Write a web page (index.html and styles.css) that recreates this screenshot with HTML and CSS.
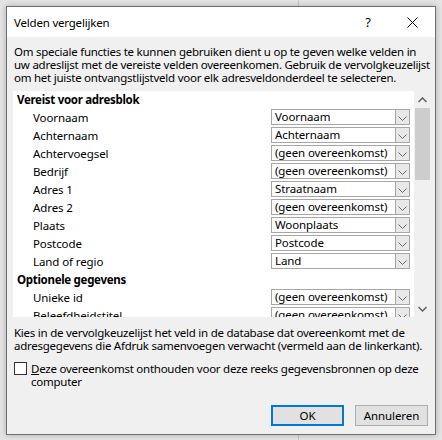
FILE: index.html
```html
<!DOCTYPE html>
<html lang="nl">
<head>
<meta charset="utf-8">
<title>Velden vergelijken</title>
<link rel="stylesheet" href="styles.css">
</head>
<body>
<div class="dialog">
  <div class="titlebar">
    <span class="title">Velden vergelijken</span>
    <span class="help">?</span>
    <span class="close"><svg width="11" height="11" viewBox="0 0 11 11"><path d="M0.5 0.5L10.5 10.5M10.5 0.5L0.5 10.5" stroke="#000" stroke-width="1" fill="none"/></svg></span>
  </div>
  <div class="content">
    <p class="intro">Om speciale functies te kunnen gebruiken dient u op te geven welke velden in<br>uw adreslijst met de vereiste velden overeenkomen. Gebruik de vervolgkeuzelijst<br>om het juiste ontvangstlijstveld voor elk adresveldonderdeel te selecteren.</p>
    <div class="listbox">
      <div class="rows">
        <div class="group">Vereist voor adresblok</div>
        <div class="row"><span class="label">Voornaam</span><div class="combo"><span class="value">Voornaam</span><span class="arrow"><svg width="9" height="5" viewBox="0 0 9 5"><path d="M0.5 0.5L4.5 4.5L8.5 0.5" stroke="#6a6a6a" fill="none"/></svg></span></div></div>
        <div class="row"><span class="label">Achternaam</span><div class="combo"><span class="value">Achternaam</span><span class="arrow"><svg width="9" height="5" viewBox="0 0 9 5"><path d="M0.5 0.5L4.5 4.5L8.5 0.5" stroke="#6a6a6a" fill="none"/></svg></span></div></div>
        <div class="row"><span class="label">Achtervoegsel</span><div class="combo"><span class="value">(geen overeenkomst)</span><span class="arrow"><svg width="9" height="5" viewBox="0 0 9 5"><path d="M0.5 0.5L4.5 4.5L8.5 0.5" stroke="#6a6a6a" fill="none"/></svg></span></div></div>
        <div class="row"><span class="label">Bedrijf</span><div class="combo"><span class="value">(geen overeenkomst)</span><span class="arrow"><svg width="9" height="5" viewBox="0 0 9 5"><path d="M0.5 0.5L4.5 4.5L8.5 0.5" stroke="#6a6a6a" fill="none"/></svg></span></div></div>
        <div class="row"><span class="label">Adres 1</span><div class="combo"><span class="value">Straatnaam</span><span class="arrow"><svg width="9" height="5" viewBox="0 0 9 5"><path d="M0.5 0.5L4.5 4.5L8.5 0.5" stroke="#6a6a6a" fill="none"/></svg></span></div></div>
        <div class="row"><span class="label">Adres 2</span><div class="combo"><span class="value">(geen overeenkomst)</span><span class="arrow"><svg width="9" height="5" viewBox="0 0 9 5"><path d="M0.5 0.5L4.5 4.5L8.5 0.5" stroke="#6a6a6a" fill="none"/></svg></span></div></div>
        <div class="row"><span class="label">Plaats</span><div class="combo"><span class="value">Woonplaats</span><span class="arrow"><svg width="9" height="5" viewBox="0 0 9 5"><path d="M0.5 0.5L4.5 4.5L8.5 0.5" stroke="#6a6a6a" fill="none"/></svg></span></div></div>
        <div class="row"><span class="label">Postcode</span><div class="combo"><span class="value">Postcode</span><span class="arrow"><svg width="9" height="5" viewBox="0 0 9 5"><path d="M0.5 0.5L4.5 4.5L8.5 0.5" stroke="#6a6a6a" fill="none"/></svg></span></div></div>
        <div class="row"><span class="label">Land of regio</span><div class="combo"><span class="value">Land</span><span class="arrow"><svg width="9" height="5" viewBox="0 0 9 5"><path d="M0.5 0.5L4.5 4.5L8.5 0.5" stroke="#6a6a6a" fill="none"/></svg></span></div></div>
        <div class="group">Optionele gegevens</div>
        <div class="row"><span class="label">Unieke id</span><div class="combo"><span class="value">(geen overeenkomst)</span><span class="arrow"><svg width="9" height="5" viewBox="0 0 9 5"><path d="M0.5 0.5L4.5 4.5L8.5 0.5" stroke="#6a6a6a" fill="none"/></svg></span></div></div>
        <div class="row"><span class="label">Beleefdheidstitel</span><div class="combo"><span class="value">(geen overeenkomst)</span><span class="arrow"><svg width="9" height="5" viewBox="0 0 9 5"><path d="M0.5 0.5L4.5 4.5L8.5 0.5" stroke="#6a6a6a" fill="none"/></svg></span></div></div>
      </div>
      <div class="scrollbar">
        <span class="sb-btn"><svg width="9" height="6" viewBox="0 0 9 6"><path d="M0.5 5L4.5 1L8.5 5" stroke="#606060" stroke-width="1.5" fill="none"/></svg></span>
        <div class="track"><div class="thumb"></div></div>
        <span class="sb-btn"><svg width="9" height="6" viewBox="0 0 9 6"><path d="M0.5 1L4.5 5L8.5 1" stroke="#606060" stroke-width="1.5" fill="none"/></svg></span>
      </div>
    </div>
    <p class="hint">Kies in de vervolgkeuzelijst het veld in de database dat overeenkomt met de<br>adresgegevens die Afdruk samenvoegen verwacht (vermeld aan de linkerkant).</p>
    <label class="check">
      <span class="box"></span>
      <span class="check-text"><u>D</u>eze overeenkomst onthouden voor deze reeks gegevensbronnen op deze<br>computer</span>
    </label>
    <div class="buttons">
      <button class="btn btn-default">OK</button>
      <button class="btn">Annuleren</button>
    </div>
  </div>
</div>
</body>
</html>
```

FILE: styles.css
```css
html, body {
  margin: 0;
  padding: 0;
}
body {
  width: 442px;
  height: 440px;
  overflow: hidden;
  background: linear-gradient(to right, transparent 298px, #c9c9c9 298px, #c9c9c9 299px, transparent 299px), #e4e4e4;
  font-family: "Noto Sans", "Open Sans", sans-serif;
  font-size: 11.5px;
  color: #000;
  padding: 6px 0 0 6px;
  box-sizing: border-box;
}
.dialog {
  width: 430px;
  height: 429px;
  box-sizing: border-box;
  border: 1px solid #6f6f6f;
  background: #f0f0f0;
  box-shadow: 0 0 6px rgba(0, 0, 0, 0.25);
  display: flex;
  flex-direction: column;
}
.titlebar {
  height: 30px;
  background: #fff;
  display: flex;
  align-items: center;
  padding-left: 7px;
}
.title {
  flex: 1;
  letter-spacing: -0.2px;
}
.help {
  width: 14px;
  text-align: center;
  font-size: 13px;
  margin-right: 32px;
}
.close {
  width: 11px;
  height: 11px;
  margin-right: 17px;
  display: flex;
}
.content {
  flex: 1;
  display: flex;
  flex-direction: column;
  padding: 0 4px 8px 6px;
}
.intro, .hint {
  margin: 8px 0 0 1px;
  line-height: 13px;
  white-space: nowrap;
  letter-spacing: -0.25px;
}
.listbox {
  margin-top: 7px;
  height: 226px;
  background: #fff;
  display: flex;
  overflow: hidden;
}
.rows {
  flex: 1;
  padding-right: 4px;
}
.group {
  height: 18px;
  line-height: 17px;
  font-weight: bold;
  padding-left: 4px;
  letter-spacing: -0.3px;
}
.row {
  height: 18px;
  display: grid;
  grid-template-columns: 1fr 139px;
  align-items: start;
  padding-left: 20px;
}
.label {
  line-height: 17px;
  letter-spacing: -0.1px;
}
.combo {
  height: 16px;
  box-sizing: border-box;
  border: 1px solid #a6a6a6;
  background: #fff;
  display: flex;
}
.value {
  flex: 1;
  padding-left: 3px;
  line-height: 14px;
  white-space: nowrap;
  overflow: hidden;
  letter-spacing: -0.1px;
}
.arrow {
  width: 14px;
  flex: none;
  box-sizing: border-box;
  border-left: 1px solid #a6a6a6;
  background: #e8e8e8;
  display: flex;
  align-items: center;
  justify-content: center;
  padding-top: 2px;
}
.scrollbar {
  width: 17px;
  flex: none;
  background: #f0f0f0;
  display: flex;
  flex-direction: column;
}
.sb-btn {
  height: 17px;
  display: flex;
  align-items: center;
  justify-content: center;
}
.track {
  flex: 1;
  padding: 0 1px;
}
.thumb {
  height: 72px;
  background: #cdcdcd;
}
.hint {
  margin-top: 9px;
}
.check {
  margin-top: 10px;
  display: flex;
  align-items: flex-start;
  padding-left: 1px;
}
.box {
  width: 13px;
  height: 13px;
  flex: none;
  box-sizing: border-box;
  border: 1px solid #333;
  background: #fff;
  margin-right: 4px;
}
.check-text {
  line-height: 13px;
  white-space: nowrap;
  letter-spacing: -0.25px;
}
.buttons {
  margin-top: auto;
  display: flex;
  justify-content: flex-end;
  gap: 11px;
  padding-right: 3px;
}
.btn {
  width: 73px;
  height: 21px;
  box-sizing: border-box;
  border: 1px solid #adadad;
  background: #e1e1e1;
  font-family: inherit;
  font-size: 11.5px;
  color: #000;
  padding: 0;
  letter-spacing: -0.1px;
}
.btn-default {
  border: 2px solid #0078d7;
}
```
